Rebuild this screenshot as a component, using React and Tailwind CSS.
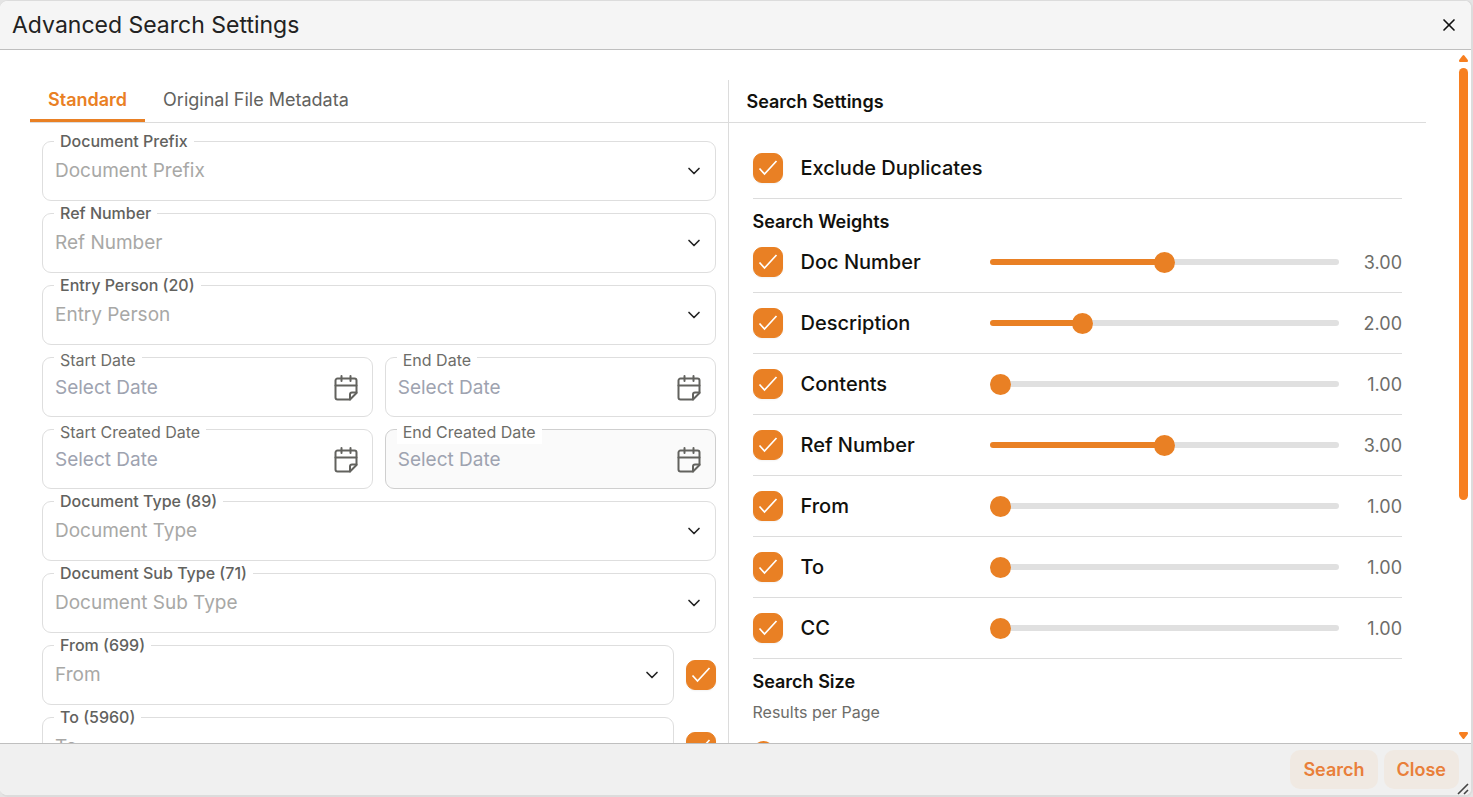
import { useState } from 'react'
import { ChevronDown, X } from 'lucide-react'

const weights = [
  { id: 'doc-number', name: 'Doc Number', value: 3 },
  { id: 'description', name: 'Description', value: 2 },
  { id: 'contents', name: 'Contents', value: 1 },
  { id: 'ref-number', name: 'Ref Number', value: 3 },
  { id: 'weight-from', name: 'From', value: 1 },
  { id: 'weight-to', name: 'To', value: 1 },
  { id: 'weight-cc', name: 'CC', value: 1 },
]

function classNames(...classes) {
  return classes.filter(Boolean).join(' ')
}

function CalendarIcon() {
  return (
    <svg
      className="h-[26px] w-6"
      viewBox="0 0 24 26"
      fill="none"
      stroke="currentColor"
      strokeWidth="2"
      strokeLinecap="round"
      strokeLinejoin="round"
      aria-hidden="true"
    >
      <path d="M16 24.5H3.5A2 2 0 0 1 1.5 22.5V5.5A2 2 0 0 1 3.5 3.5h17A2 2 0 0 1 22.5 5.5V18z" />
      <path d="M16 24.5V19.5a2 2 0 0 1 2-2h4.5M1.5 10.5h21M7.5 1v5M16.5 1v5" />
    </svg>
  )
}

function Checkbox({ id, label }) {
  return (
    <span className="relative flex h-[30px] w-[30px] flex-none">
      <input
        id={id}
        type="checkbox"
        defaultChecked
        aria-label={label}
        className="peer h-full w-full appearance-none rounded-[9px] border border-[#dcdcdc] bg-white shadow-xs checked:border-[#e98024] checked:bg-[#e98024]"
      />
      <svg
        className="pointer-events-none absolute inset-0 hidden peer-checked:block"
        viewBox="0 0 30 30"
        fill="none"
        stroke="#fff"
        strokeWidth="1.7"
        aria-hidden="true"
      >
        <path d="M6.5 15.5l5 5.5L23.5 8" />
      </svg>
    </span>
  )
}

function SelectField({ id, label, placeholder }) {
  return (
    <div className="relative flex-1">
      <label htmlFor={id} className="absolute -top-3 left-3 bg-white px-1.5 text-base leading-6 font-medium text-[#62625e]">
        {label}
      </label>
      <select
        id={id}
        defaultValue=""
        className="block h-[60px] w-full appearance-none rounded-[9px] border border-[#dedede] bg-transparent px-3 text-[19px] text-[#a8a8a6]"
      >
        <option value="">{placeholder}</option>
      </select>
      <ChevronDown size={20} className="pointer-events-none absolute top-5 right-3 text-[#222]" />
    </div>
  )
}

function DateField({ id, label, active }) {
  return (
    <div
      className={classNames(
        'relative flex h-[60px] min-w-0 flex-1 items-center rounded-[9px] border pt-0.5 pr-3.5 pl-3',
        active ? 'border-[#cfcfcf] bg-[#fafafa]' : 'border-[#dedede] bg-white'
      )}
    >
      <label htmlFor={id} className="absolute -top-2.5 left-[11px] bg-white px-1.5 text-base leading-6 text-[#6d6d69]">
        {label}
      </label>
      <input
        id={id}
        type="text"
        placeholder="Select Date"
        className="min-w-0 flex-1 bg-transparent text-[19px] text-[#62625e] outline-none placeholder:text-[#9ea3b0]"
      />
      <button type="button" aria-label={`Pick ${label}`} className="flex-none text-[#62625e]">
        <CalendarIcon />
      </button>
    </div>
  )
}

function Slider({ label, value, onChange }) {
  return (
    <input
      type="range"
      min="1"
      max="5"
      step="0.25"
      value={value}
      aria-label={label}
      onChange={(e) => onChange(Number(e.target.value))}
      style={{ '--fill': `${((value - 1) / 4) * 100}%` }}
      className="block h-[21px] w-full min-w-0 flex-1 appearance-none bg-transparent [&::-webkit-slider-runnable-track]:h-1.5 [&::-webkit-slider-runnable-track]:rounded-full [&::-webkit-slider-runnable-track]:bg-[linear-gradient(to_right,#e98024_var(--fill),#e0e0e0_var(--fill))] [&::-webkit-slider-thumb]:-mt-[7px] [&::-webkit-slider-thumb]:h-[21px] [&::-webkit-slider-thumb]:w-[21px] [&::-webkit-slider-thumb]:appearance-none [&::-webkit-slider-thumb]:rounded-full [&::-webkit-slider-thumb]:bg-[#e98024]"
    />
  )
}

function WeightRow({ item }) {
  const [value, setValue] = useState(item.value)

  return (
    <li className="flex h-[61px] items-center border-b border-[#dcdcdc]">
      <div className="flex w-[237px] flex-none items-center gap-[18px]">
        <Checkbox id={item.id} />
        <label htmlFor={item.id} className="text-xl font-medium text-[#11110d]">
          {item.name}
        </label>
      </div>
      <Slider label={`${item.name} weight`} value={value} onChange={setValue} />
      <output className="w-[63px] flex-none pt-0.5 text-right text-lg text-[#6d6d69]">{value.toFixed(2)}</output>
    </li>
  )
}

function StandardPanel() {
  return (
    <form className="flex flex-col gap-3 px-3 pt-[18px]">
      <SelectField id="prefix" label="Document Prefix" placeholder="Document Prefix" />
      <SelectField id="ref" label="Ref Number" placeholder="Ref Number" />
      <SelectField id="entry" label="Entry Person (20)" placeholder="Entry Person" />
      <div className="flex gap-3">
        <DateField id="start-date" label="Start Date" />
        <DateField id="end-date" label="End Date" />
      </div>
      <div className="flex gap-3">
        <DateField id="start-created" label="Start Created Date" />
        <DateField id="end-created" label="End Created Date" active />
      </div>
      <SelectField id="doc-type" label="Document Type (89)" placeholder="Document Type" />
      <SelectField id="doc-sub-type" label="Document Sub Type (71)" placeholder="Document Sub Type" />
      <div className="flex items-center gap-3">
        <SelectField id="from" label="From (699)" placeholder="From" />
        <Checkbox id="from-enabled" label="Use From" />
      </div>
      <div className="flex items-center gap-3">
        <SelectField id="to" label="To (5960)" placeholder="To" />
        <Checkbox id="to-enabled" label="Use To" />
      </div>
    </form>
  )
}

function SettingsPanel() {
  const [pageSize, setPageSize] = useState(1)

  return (
    <section className="min-w-0 flex-1 border-l border-[#dcdcdc]">
      <h2 className="flex h-[43px] items-center border-b border-[#dcdcdc] pt-0.5 pl-[18px] text-lg font-semibold text-[#11110d]">
        Search Settings
      </h2>
      <div className="px-6 pt-[15px]">
        <div className="flex h-[61px] items-center gap-[18px] border-b border-[#dcdcdc]">
          <Checkbox id="exclude" />
          <label htmlFor="exclude" className="text-xl font-medium text-[#11110d]">
            Exclude Duplicates
          </label>
        </div>
        <h3 className="pt-3 text-lg leading-[21px] font-semibold text-[#11110d]">Search Weights</h3>
        <ul role="list">
          {weights.map((item) => (
            <WeightRow key={item.id} item={item} />
          ))}
        </ul>
        <h3 className="pt-3 text-lg leading-[21px] font-semibold text-[#11110d]">Search Size</h3>
        <p className="mt-2 mb-4 text-base text-[#6d6d69]">Results per Page</p>
        <Slider label="Results per Page" value={pageSize} onChange={setPageSize} />
      </div>
    </section>
  )
}

/* Scroll bar with arrow caps */
function ScrollRail() {
  return (
    <div className="flex w-[15px] flex-none flex-col items-center pt-1 pb-[3px] text-[#f77f20]" aria-hidden="true">
      <svg className="h-2 w-[9px]" viewBox="0 0 9 8" fill="currentColor">
        <path d="M3.6 1.5Q4.5.5 5.4 1.5L8.8 6Q9.4 8 8 8H1Q-.4 8 .2 6z" />
      </svg>
      <div className="mt-1.5 mb-2.5 w-full flex-1 px-[3px]">
        <div className="h-[66%] rounded-full bg-current" />
      </div>
      <svg className="h-2 w-[9px]" viewBox="0 0 9 8" fill="currentColor">
        <path d="M3.6 6.5Q4.5 7.5 5.4 6.5L8.8 2Q9.4 0 8 0H1Q-.4 0 .2 2z" />
      </svg>
    </div>
  )
}

export default function App() {
  return (
    <div className="h-screen bg-[#e4e4e4] font-['Inter',sans-serif]">
      <div className="relative flex h-full flex-col overflow-hidden rounded-lg border-t border-r-2 border-b-2 border-[#dcdcdc] bg-white">
        <header className="flex h-[49px] flex-none items-center justify-between border-b border-[#bfbfbf] bg-[#f5f5f5] pr-3 pl-3">
          <h1 className="text-[23px] text-[#222]">Advanced Search Settings</h1>
          <button type="button" aria-label="Close dialog" className="text-[#111]">
            <X size={20} />
          </button>
        </header>

        <div className="flex min-h-0 flex-1">
          <main className="flex min-w-0 flex-1 items-start overflow-hidden p-[30px]">
            <section className="min-w-0 flex-1">
              <div role="tablist" className="flex h-[43px] border-b border-[#dcdcdc]">
                <button
                  type="button"
                  role="tab"
                  aria-selected="true"
                  className="border-b-3 border-[#e98024] px-[18px] text-lg font-semibold text-[#e98024]"
                >
                  Standard
                </button>
                <button
                  type="button"
                  role="tab"
                  aria-selected="false"
                  className="border-b-3 border-transparent px-[18px] text-lg text-[#62625e]"
                >
                  Original File Metadata
                </button>
              </div>
              <StandardPanel />
            </section>
            <SettingsPanel />
          </main>
          <ScrollRail />
        </div>

        <footer className="flex flex-none justify-end gap-1.5 border-t border-[#bfbfbf] bg-[#f0f0f0] py-1.5 pr-3">
          <button type="button" className="h-[39px] rounded-[10px] bg-[#f0e9e2] px-[13px] text-lg font-semibold text-[#e97f3a]">
            Search
          </button>
          <button type="button" className="h-[39px] rounded-[10px] bg-[#f0e9e2] px-[13px] text-lg font-semibold text-[#e97f3a]">
            Close
          </button>
        </footer>
        <svg
          className="absolute right-0.5 bottom-0 h-3 w-3 text-[#444]"
          viewBox="0 0 12 12"
          fill="none"
          stroke="currentColor"
          strokeWidth="1.6"
          aria-hidden="true"
        >
          <path d="M1 11L11 1M7 11l4-4" />
        </svg>
      </div>
    </div>
  )
}
